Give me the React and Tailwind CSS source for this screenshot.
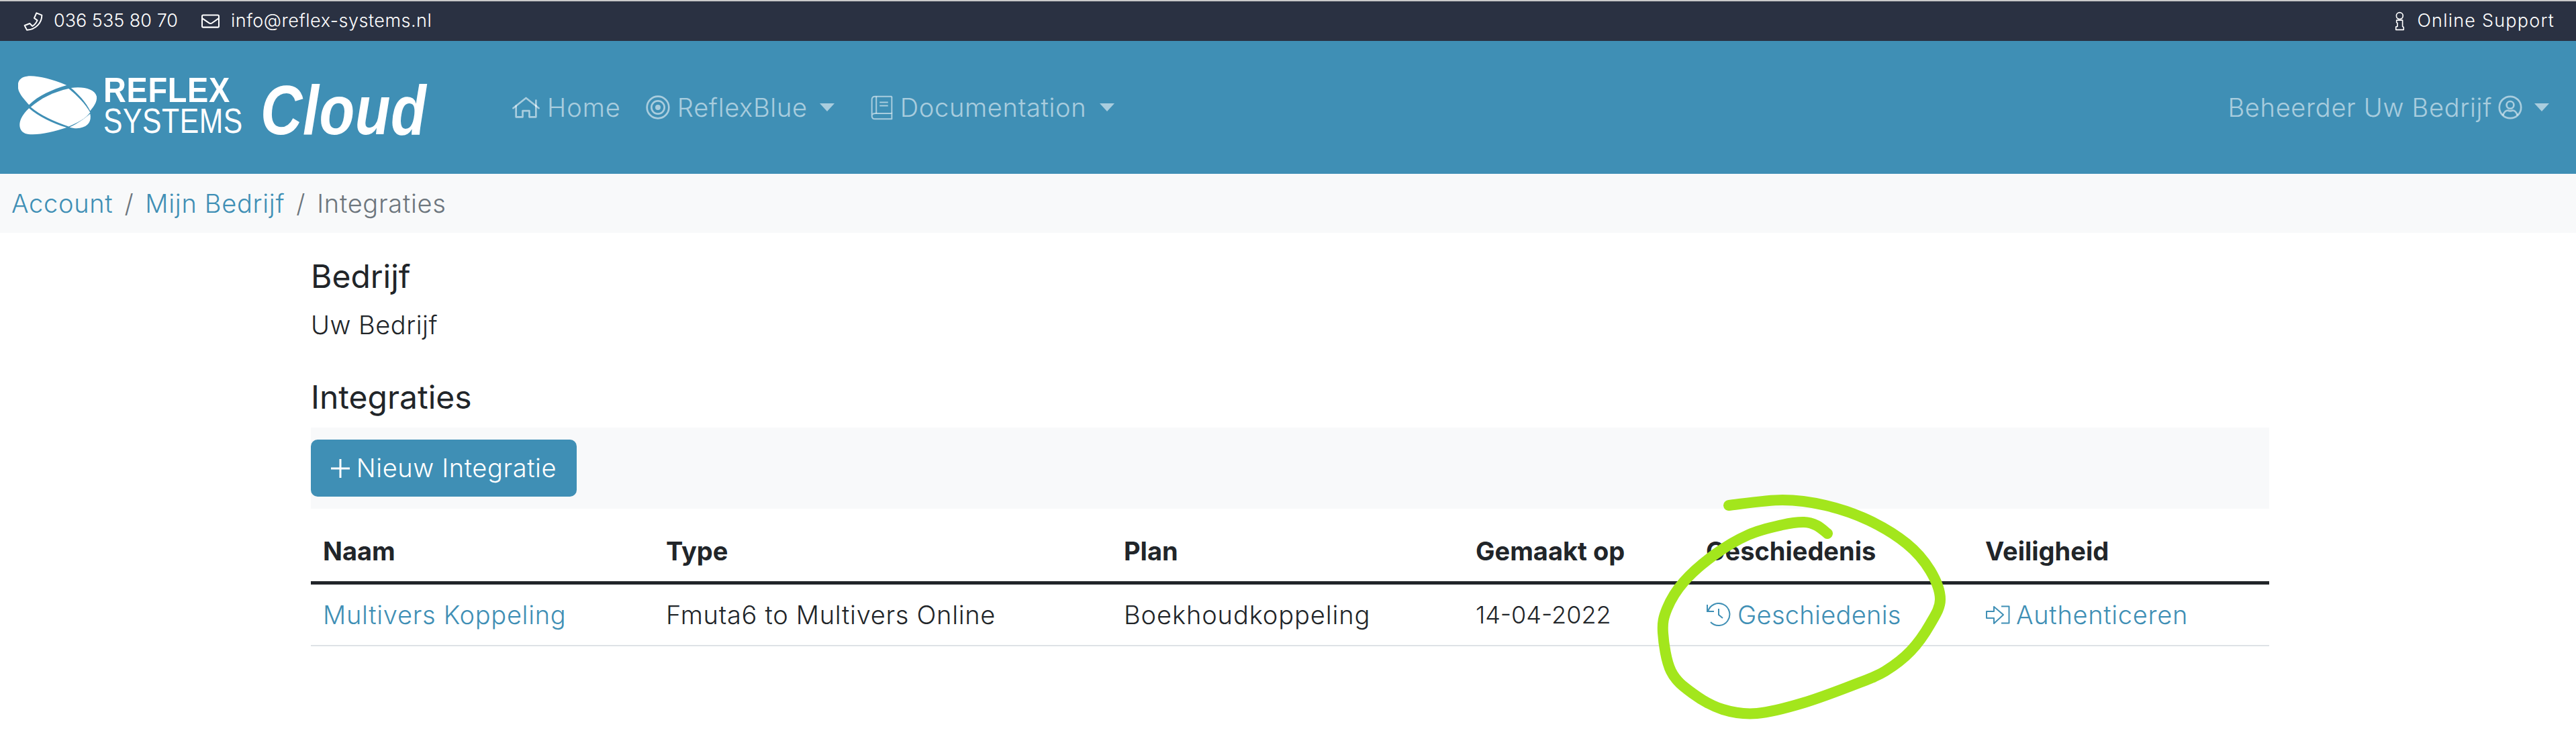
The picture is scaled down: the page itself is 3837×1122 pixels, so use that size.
import React from 'react';

const columns = ['w-[511px]', 'w-[682px]', 'w-[524px]', 'w-[343px]', 'w-[416px]', 'w-[441px]'];

const Caret = () => (
  <span className="block w-0 h-0 border-x-[11px] border-x-transparent border-t-[12px] border-t-white/55"></span>
);

const PhoneIcon = () => (
  <svg className="w-[30px] h-[30px] shrink-0" viewBox="30 30 90 90" fill="none" stroke="currentColor" strokeWidth="6" strokeLinejoin="round">
    <path d="M88 37L112 47C112 80 85 112 45 113L35 93L58 84L70 96C80 90 87 80 92 70L78 60Z" />
  </svg>
);

const MailIcon = () => (
  <svg className="w-[27px] h-[21px] shrink-0" viewBox="0 0 80 60" fill="none" stroke="currentColor" strokeWidth="6">
    <rect x="3" y="3" width="74" height="54" rx="5" />
    <path d="M3 17L33 38Q40 43 47 38L77 17" />
  </svg>
);

const InfoIcon = () => (
  <svg className="w-[15px] h-[29px] shrink-0" viewBox="40 20 45 88" fill="none" stroke="currentColor" strokeWidth="5" strokeLinejoin="round">
    <circle cx="62" cy="40" r="15" />
    <path d="M48 60H75V88L80 92V103H45V90L52 88V72L48 70Z" />
  </svg>
);

const HomeIcon = () => (
  <svg className="w-[43px] h-[33px] shrink-0" viewBox="35 38 130 100" fill="none" stroke="currentColor" strokeWidth="8" strokeLinecap="round" strokeLinejoin="round">
    <path d="M42 90L100 44L158 90" />
    <path d="M55 80V130H85V102H115V130H145V80" />
    <path d="M145 55V80" />
  </svg>
);

const BullseyeIcon = () => (
  <svg className="w-[36px] h-[36px] shrink-0" viewBox="0 0 108 108" fill="none" stroke="currentColor" strokeWidth="8">
    <circle cx="54" cy="54" r="49" />
    <circle cx="54" cy="54" r="29" />
    <circle cx="54" cy="54" r="12" fill="currentColor" stroke="none" />
  </svg>
);

const BookIcon = () => (
  <svg className="w-[33px] h-[37px] shrink-0" viewBox="35 33 100 112" fill="none" stroke="currentColor" strokeWidth="6" strokeLinejoin="round">
    <path d="M130 38H55Q40 38 40 53V125Q40 140 55 140H130V115H55Q40 115 40 128" />
    <path d="M130 38V115M60 38V115M75 65H113M75 80H113" />
  </svg>
);

const UserIcon = () => (
  <svg className="w-[36px] h-[36px] shrink-0" viewBox="0 0 40 40" fill="none" stroke="currentColor" strokeWidth="3">
    <circle cx="20" cy="20" r="18" />
    <circle cx="20" cy="16" r="6" />
    <path d="M8 33Q11 25 16 25Q20 27 24 25Q29 25 32 33" />
  </svg>
);

const PlusIcon = () => (
  <svg className="w-[28px] h-[28px] shrink-0" viewBox="0 0 28 28" fill="none" stroke="currentColor" strokeWidth="3">
    <path d="M14 0V28M0 14H28" />
  </svg>
);

const HistoryIcon = () => (
  <svg className="w-[38px] h-[36px] shrink-0" viewBox="10 12 38 36" fill="none" stroke="currentColor" strokeWidth="2">
    <path d="M13 25A16.5 16.5 0 1 1 17 41" />
    <path d="M12 15V25H22" />
    <path d="M29 21V30L35 35" />
  </svg>
);

const SignInIcon = () => (
  <svg className="w-[38px] h-[34px] shrink-0" viewBox="11 13 38 34" fill="none" stroke="currentColor" strokeWidth="2" strokeLinejoin="round">
    <path d="M13 25H24V18L38 30L24 43V35H13Z" />
    <path d="M35 17.5H46.5V42.5H35" />
  </svg>
);

const Logo = () => (
  <div className="flex items-start w-[640px] h-[100px] ml-[27px]">
    <svg className="w-[127px] h-[93px] mt-[2px] shrink-0" viewBox="60 345 290 280" preserveAspectRatio="none" fill="#fff">
      <path d="M225 390C170 360 120 345 90 350C60 355 55 385 62 415C70 440 85 460 97 478C130 435 175 410 225 390Z" />
      <path d="M240 402C280 395 320 405 327 440C330 465 315 490 305 505C290 465 265 430 240 402Z" />
      <path d="M232 405C260 435 290 475 305 512C290 540 260 560 232 575C185 555 135 525 103 488C135 450 180 420 232 405Z" />
      <path d="M97 493C130 530 175 560 225 580C180 600 130 615 95 610C65 605 60 570 70 540C75 525 85 508 97 493Z" />
      <path d="M305 518C310 550 300 575 270 582C260 585 245 583 235 578C262 563 285 540 305 518Z" />
    </svg>
    <div className="w-[234px] font-['Liberation_Sans',sans-serif] text-white">
      <div className="text-[51px] leading-[40px] mt-[5px] font-bold origin-left scale-x-[0.92] whitespace-nowrap">REFLEX</div>
      <div className="text-[52px] leading-[40px] mt-[5px] origin-left scale-x-[0.82] whitespace-nowrap">SYSTEMS</div>
    </div>
    <div className="text-[104px] leading-[90px] mt-[9px] font-['Liberation_Sans',sans-serif] font-bold italic text-white origin-left scale-x-[0.83] whitespace-nowrap">
      Cloud
    </div>
  </div>
);

// hand drawn marker circle, points are picked off the screenshot
const points = [
  [2575, 753], [2655, 745], [2719, 753], [2783, 775], [2840, 810], [2875, 850], [2890, 893], [2875, 930],
  [2846, 970], [2808, 1000], [2770, 1017], [2687, 1047], [2617, 1063], [2566, 1057], [2521, 1033], [2489, 1000],
  [2477, 943], [2483, 907], [2508, 867], [2553, 827], [2604, 797], [2655, 782], [2687, 778], [2706, 783], [2722, 795],
];

const smoothPath = (pts) => {
  let d = `M${pts[0][0]} ${pts[0][1]}`;
  for (let i = 0; i < pts.length - 1; i++) {
    const p0 = pts[i - 1] || pts[i];
    const p1 = pts[i];
    const p2 = pts[i + 1];
    const p3 = pts[i + 2] || p2;
    const c1 = [p1[0] + (p2[0] - p0[0]) / 6, p1[1] + (p2[1] - p0[1]) / 6];
    const c2 = [p2[0] - (p3[0] - p1[0]) / 6, p2[1] - (p3[1] - p1[1]) / 6];
    d += `C${c1[0]} ${c1[1]} ${c2[0]} ${c2[1]} ${p2[0]} ${p2[1]}`;
  }
  return d;
};

const App = () => {
  return (
    <div className="relative min-h-[1122px] bg-white font-['Inter',sans-serif] font-light text-[#212529]">
      {/* top bar */}
      <div className="border-t-2 border-[#c9c9c9] bg-[#2a3142] h-[61px] flex items-center justify-between pl-[35px] pr-[32px] text-white text-[27px]">
        <div className="flex items-center">
          <PhoneIcon />
          <span className="ml-[15px]">036 535 80 70</span>
          <span className="ml-[35px] mr-[17px]"><MailIcon /></span>
          <span className="tracking-[0.5px]">info@reflex-systems.nl</span>
        </div>
        <div className="flex items-center">
          <InfoIcon />
          <span className="ml-[18px] tracking-[1.2px]">Online Support</span>
        </div>
      </div>

      {/* navbar */}
      <div className="bg-[#3f8fb5] h-[198px] flex items-center text-white/55 text-[38px] tracking-[0.7px]">
        <Logo />
        <div className="flex items-center ml-[95px]">
          <HomeIcon />
          <span className="ml-[10px] tracking-[1px]">Home</span>
          <span className="ml-[37px] mr-[11px]"><BullseyeIcon /></span>
          <span>ReflexBlue</span>
          <span className="ml-[18px] mr-[54px]"><Caret /></span>
          <BookIcon />
          <span className="ml-[11px]">Documentation</span>
          <span className="ml-[20px]"><Caret /></span>
        </div>
        <div className="ml-auto flex items-center pr-[40px]">
          <span>Beheerder Uw Bedrijf</span>
          <span className="ml-[9px] mr-[18px]"><UserIcon /></span>
          <Caret />
        </div>
      </div>

      {/* breadcrumb */}
      <div className="bg-[#f8f9fa] h-[88px] flex items-center pl-[17px] text-[38px] tracking-[0.7px]">
        <span className="text-[#3f8fb5]">Account</span>
        <span className="mx-[17px] text-[#6c757d]">/</span>
        <span className="text-[#3f8fb5]">Mijn Bedrijf</span>
        <span className="mx-[17px] text-[#6c757d]">/</span>
        <span className="text-[#6c757d]">Integraties</span>
      </div>

      <div className="ml-[463px] w-[2917px] pt-[37px]">
        <h5 className="text-[48px] leading-[56px] font-normal">Bedrijf</h5>
        <p className="text-[38px] leading-[48px] mt-[20px] tracking-[0.5px]">Uw Bedrijf</p>
        <h5 className="text-[48px] leading-[56px] font-normal mt-[56px]">Integraties</h5>

        <div className="bg-[#f8f9fa] mt-[17px] py-[18px]">
          <button className="w-[396px] h-[85px] rounded-[10px] bg-[#3f8fb5] text-white text-[38px] tracking-[0.6px] flex items-center justify-center">
            <PlusIcon />
            <span className="ml-[10px]">Nieuw Integratie</span>
          </button>
        </div>

        {/* table */}
        <div className="pt-[18px] flex items-center h-[113px] border-b-[5px] border-[#212529] font-bold text-[38px]">
          {['Naam', 'Type', 'Plan', 'Gemaakt op', 'Geschiedenis', 'Veiligheid'].map((title, i) => (
            <div key={title} className={`${columns[i]} px-[18px] h-[90px] flex items-center`}>{title}</div>
          ))}
        </div>
        <div className="flex items-center h-[92px] border-b-2 border-[#dee2e6] text-[38px] tracking-[0.7px]">
          <div className={`${columns[0]} px-[18px] text-[#3f8fb5]`}>Multivers Koppeling</div>
          <div className={`${columns[1]} px-[18px]`}>Fmuta6 to Multivers Online</div>
          <div className={`${columns[2]} px-[18px] tracking-[0.9px]`}>Boekhoudkoppeling</div>
          <div className={`${columns[3]} px-[18px] text-[36px] tracking-normal`}>14-04-2022</div>
          <div className={`${columns[4]} px-[18px] text-[#3f8fb5] flex items-center tracking-[0.3px]`}>
            <HistoryIcon />
            <span className="ml-[9px]">Geschiedenis</span>
          </div>
          <div className={`${columns[5]} px-[18px] text-[#3f8fb5] flex items-center`}>
            <SignInIcon />
            <span className="ml-[8px]">Authenticeren</span>
          </div>
        </div>
      </div>

      {/* green marker on top of the page */}
      <svg className="absolute left-0 top-0 w-[3837px] h-[1122px] pointer-events-none" viewBox="0 0 3837 1122" fill="none">
        <path d={smoothPath(points)} stroke="#a3e61c" strokeWidth="16" strokeLinecap="round" strokeLinejoin="round" />
      </svg>
    </div>
  );
};

export default App;
